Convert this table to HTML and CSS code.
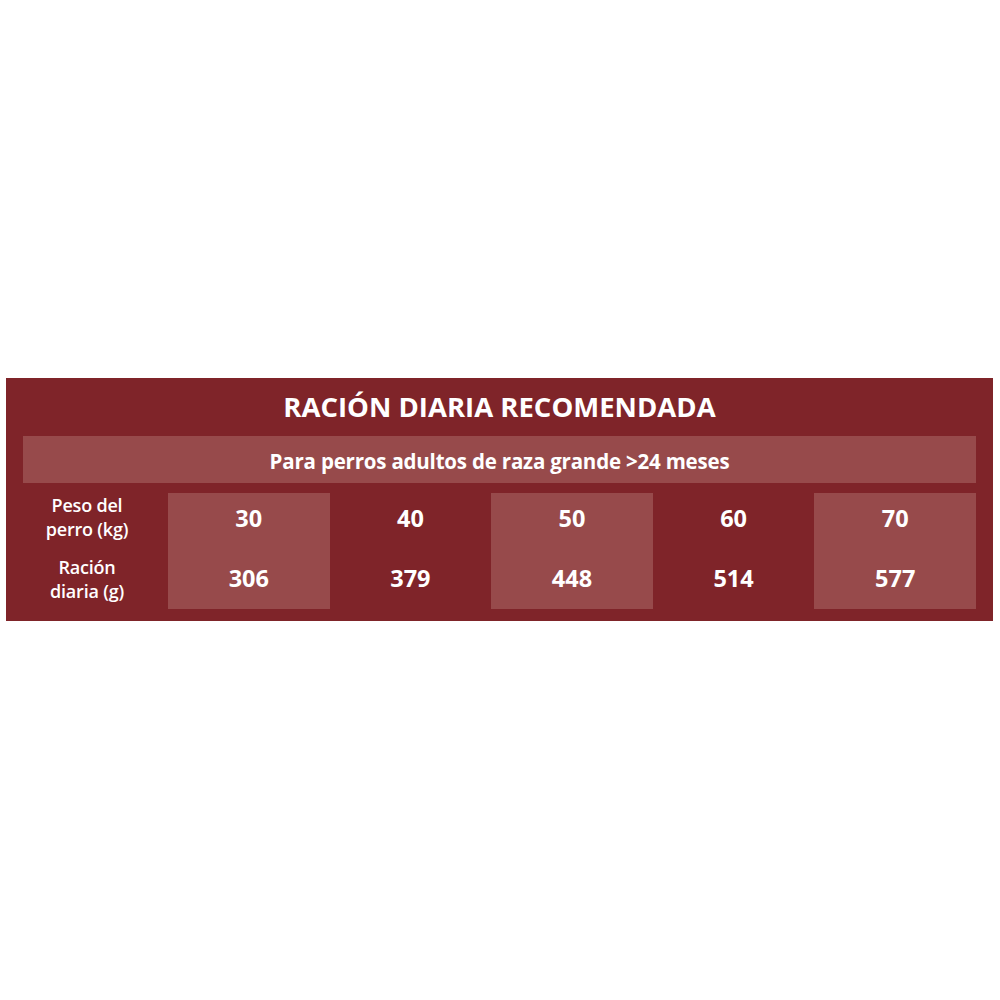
FILE: index.html
```html
<!DOCTYPE html>
<html lang="es">
<head>
<meta charset="utf-8">
<title>Ración diaria recomendada</title>
<link rel="stylesheet" href="styles.css">
</head>
<body>
<div class="page">
  <section class="panel">
    <h1 class="title">RACIÓN DIARIA RECOMENDADA</h1>
    <div class="subtitle">Para perros adultos de raza grande &gt;24 meses</div>
    <div class="grid">
      <div class="label top">Peso del<br>perro (kg)</div>
      <div class="cell light top">30</div>
      <div class="cell top">40</div>
      <div class="cell light top">50</div>
      <div class="cell top">60</div>
      <div class="cell light top">70</div>
      <div class="label bottom">Ración<br>diaria (g)</div>
      <div class="cell light bottom">306</div>
      <div class="cell bottom">379</div>
      <div class="cell light bottom">448</div>
      <div class="cell bottom">514</div>
      <div class="cell light bottom">577</div>
    </div>
  </section>
</div>
</body>
</html>
```

FILE: styles.css
```css
html, body {
  margin: 0;
  padding: 0;
  background: #ffffff;
}
body {
  font-family: "Open Sans", "Liberation Sans", sans-serif;
  color: #ffffff;
}
.page {
  width: 1000px;
  height: 1000px;
  padding-top: 378px;
  box-sizing: border-box;
}
.panel {
  margin-left: 6px;
  width: 987px;
  height: 243px;
  box-sizing: border-box;
  background: #7f2429;
  padding: 0 17px 12px 17px;
  display: flex;
  flex-direction: column;
}
.title {
  margin: 0;
  height: 58px;
  display: flex;
  align-items: center;
  justify-content: center;
  font-size: 27.5px;
  font-weight: 700;
  padding-bottom: 2px;
  box-sizing: border-box;
}
.subtitle {
  height: 47px;
  background: #974a4b;
  display: flex;
  align-items: center;
  justify-content: center;
  font-size: 20.5px;
  font-weight: 700;
  letter-spacing: -0.2px;
  padding-top: 2px;
  box-sizing: border-box;
}
.grid {
  margin-top: 10px;
  display: grid;
  grid-template-columns: 145px repeat(5, 1fr);
  grid-template-rows: 58px 58px;
}
.label {
  padding-right: 17px;
  display: flex;
  align-items: center;
  justify-content: center;
  text-align: center;
  font-size: 18px;
  font-weight: 600;
  letter-spacing: -0.2px;
  line-height: 24px;
}
.label.top {
  padding-bottom: 10px;
}
.label.bottom {
  padding-bottom: 2px;
}
.cell {
  display: flex;
  align-items: center;
  justify-content: center;
  font-size: 23.5px;
  font-weight: 700;
}
.cell.top {
  padding-bottom: 8px;
}
.cell.bottom {
  padding-bottom: 4px;
}
.light {
  background: #974a4b;
}
```
